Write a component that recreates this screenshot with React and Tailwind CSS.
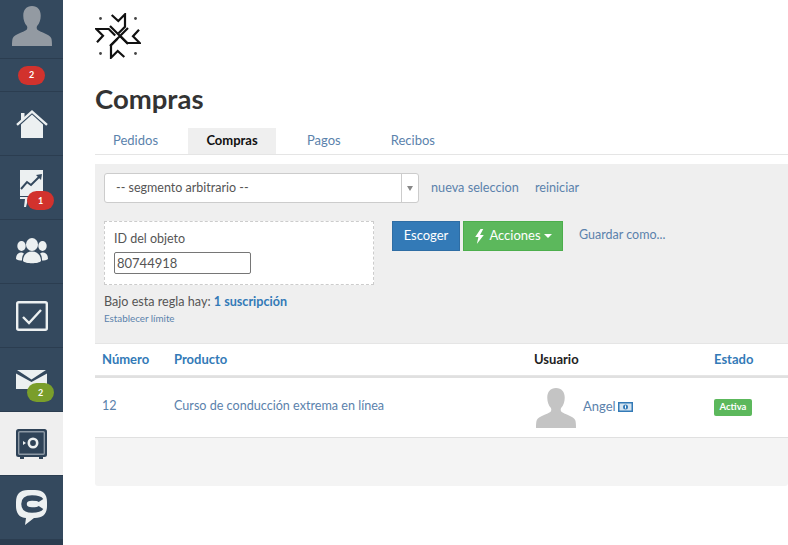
import React from "react";

function Badge({ color, children, className }) {
  return (
    <span
      className={`absolute flex h-[19px] w-[27px] items-center justify-center rounded-[10px] text-[9px] font-bold text-white ${color} ${className}`}
    >
      {children}
    </span>
  );
}

function Person({ className, fill }) {
  return (
    <svg viewBox="0 0 44 44" className={className}>
      <path
        fill={fill}
        d="M22 0c6.200 0 9.600 4.400 9.600 10.600 0 4.600-1.600 8.800-3.800 11.200-.9 1-.9 3.600.4 4.600 3.600 2.600 13 4.400 15 9.200.6 1.600.8 5 .8 8.400H0c0-3.400.2-6.800.8-8.400 2-4.800 11.400-6.600 15-9.200 1.300-1 1.300-3.600.4-4.600-2.200-2.400-3.800-6.600-3.800-11.200C12.400 4.400 15.800 0 22 0z"
      />
    </svg>
  );
}

function NavItem({ active, children }) {
  return (
    <div
      className={`relative flex h-[64px] items-center justify-center border-b border-[#2b3d50] ${
        active ? "bg-[#efefef]" : ""
      }`}
    >
      {children}
    </div>
  );
}

function Sidebar() {
  return (
    <div className="flex h-[545px] w-[63px] shrink-0 flex-col bg-[#34495e]">
      <div className="flex h-[59px] items-end justify-center border-b border-[#2b3d50] pb-[12px]">
        <Person className="h-[40px] w-[42px]" fill="#939aa2" />
      </div>
      <div className="flex h-[33px] items-center justify-center border-b border-[#2b3d50]">
        <span className="flex h-[19px] w-[27px] items-center justify-center rounded-[10px] bg-[#d2322d] text-[9px] font-bold text-white">
          2
        </span>
      </div>
      <NavItem>
        <svg viewBox="0 0 32 32" className="h-[32px] w-[32px]">
          <path fill="#ecf0f1" d="M5 16.500 16 6.500l11 10V30H5z" />
          <path fill="none" stroke="#ecf0f1" strokeWidth="2.400" d="M1 16.800 16 3.500l15 13.300" />
          <path fill="#ecf0f1" d="M5 5h3.500v5.500L5 13.500z" />
        </svg>
      </NavItem>
      <NavItem>
        <svg viewBox="0 0 24 38" className="absolute left-[20px] top-[14px] h-[38px] w-[24px]">
          <path fill="#ecf0f1" d="M0 0h23v26H0z" />
          <path fill="none" stroke="#34495e" strokeWidth="2" d="M1 19l6-7 4 3 8-8" />
          <path fill="#34495e" d="M16 5l6-1-1 6z" />
          <path fill="#ecf0f1" d="M0 27h13v2H8l-2 8H4l1-8H0z" />
        </svg>
        <Badge color="bg-[#d2322d]" className="left-[27px] top-[35px]">1</Badge>
      </NavItem>
      <NavItem>
        <svg viewBox="0 0 32 27" className="h-[27px] w-[32px]">
          <g fill="#ecf0f1">
            <ellipse cx="5.500" cy="8" rx="4.200" ry="5" />
            <ellipse cx="26.500" cy="8" rx="4.200" ry="5" />
            <path d="M0 21c0-4 2-6.500 5-6.500 1.300 0 2 .5 3 1-1.500 1.800-2 4-2 7-2.500 0-4.500-.5-6-1.500zM32 21c0-4-2-6.500-5-6.500-1.300 0-2 .5-3 1 1.500 1.800 2 4 2 7 2.500 0 4.500-.5 6-1.500z" />
            <ellipse cx="16" cy="6.500" rx="6" ry="6.500" />
            <path d="M7 23c0-5 3-9.500 9-9.500s9 4.500 9 9.500c-2 3-16 3-18 0z" />
          </g>
        </svg>
      </NavItem>
      <NavItem>
        <svg viewBox="0 0 32 30" className="h-[30px] w-[32px]">
          <rect x="1.200" y="1.200" width="29.600" height="27.600" rx="1.500" fill="none" stroke="#ecf0f1" strokeWidth="2.400" />
          <path fill="none" stroke="#ecf0f1" strokeWidth="2.400" d="M7 16l6 6L25 9" />
        </svg>
      </NavItem>
      <NavItem>
        <svg viewBox="0 0 31 19" className="absolute left-[16px] top-[22px] h-[19px] w-[31px]">
          <path fill="#ecf0f1" d="M0 3.500 15.500 12 31 3.500V19H0z" />
          <path fill="#ecf0f1" d="M1 0h29L15.500 9.500z" />
        </svg>
        <Badge color="bg-[#7a9e2b]" className="left-[27px] top-[35px]">2</Badge>
      </NavItem>
      <NavItem active>
        <svg viewBox="0 0 31 30" className="h-[30px] w-[31px]">
          <rect x="0" y="0" width="31" height="28" rx="2.500" fill="#2f4358" />
          <rect x="2.700" y="2.700" width="25.600" height="22.600" rx="1" fill="none" stroke="#8c98a4" strokeWidth="1.400" />
          <path fill="#2f4358" d="M4 28h4v2H4zM23 28h4v2h-4z" />
          <circle cx="17" cy="14" r="4.200" fill="none" stroke="#ecf0f1" strokeWidth="2.600" />
          <path fill="#ecf0f1" d="M7 12l3 2-3 2z" />
        </svg>
      </NavItem>
      <NavItem>
        <svg viewBox="0 0 31 35" className="h-[35px] w-[31px]">
          <path
            fill="#ecf0f1"
            d="M12 0h7c8 0 12 4 12 12v4c0 8-4 12-12 12h-1l-9 7 1-7C4 28 0 24 0 16v-4C0 4 4 0 12 0z"
          />
          <path fill="none" stroke="#34495e" strokeWidth="5.500" d="M25 10.500c-1-1.500-4-2.500-9-2.500-5 0-8 2-8 6s3 6 8 6c5 0 8-1 9-2.500" />
        </svg>
      </NavItem>
      <div className="flex-1 bg-[#2b3d50]" />
    </div>
  );
}

// pinwheel of four notched arms around a double-lined X
function Logo() {
  return (
    <svg viewBox="0 0 46 46" className="h-[46px] w-[46px]">
      <g fill="none" stroke="#111" strokeWidth="2.200">
        <path d="M16.700 2l6.600 6L30 1.300v12.400l-6.500 6.500" />
        <path d="M29.300 44l-6.600-6L16 44.700V32.300l6.500-6.500" />
        <path d="M2 29.300l6-6.600L1.300 16h12.400l6.500 6.500" />
        <path d="M44 16.700l-6 6.600 6.700 6.700H32.300l-6.500-6.500" />
        <path d="M15 13l18 18M33 15L15 33" />
      </g>
      <g fill="#444">
        <circle cx="5.500" cy="5.500" r="1.400" />
        <circle cx="40.500" cy="5.500" r="1.400" />
        <circle cx="5.500" cy="40.500" r="1.400" />
        <circle cx="40.500" cy="40.500" r="1.400" />
      </g>
    </svg>
  );
}

function Tabs() {
  return (
    <div className="mt-[14px] flex h-[27px] items-stretch border-b border-[#e5e5e5] text-[13px]">
      <span className="ml-[18px] flex items-center text-[#5b82ac]">Pedidos</span>
      <span className="ml-[30px] flex w-[88px] items-center justify-center bg-[#efefef] font-bold text-[#111]">
        Compras
      </span>
      <span className="ml-[31px] flex items-center text-[#5b82ac]">Pagos</span>
      <span className="ml-[50px] flex items-center text-[#5b82ac]">Recibos</span>
    </div>
  );
}

function Filters() {
  return (
    <div className="mt-[9px] h-[179px] bg-[#efefef] pl-[9px] pt-[9px]">
      <div className="flex items-center">
        <div className="flex h-[30px] w-[315px] rounded-[3px] border border-[#ccc] bg-white">
          <div className="flex-1 pl-[11px] text-[12.500px] leading-[27px] text-[#555]">
            -- segmento arbitrario --
          </div>
          <div className="flex w-[17px] items-center justify-center border-l border-[#ccc]">
            <span className="h-0 w-0 border-x-[3.500px] border-t-[5px] border-x-transparent border-t-[#888]" />
          </div>
        </div>
        <span className="ml-[12px] text-[12.700px] text-[#5b82ac]">nueva seleccion</span>
        <span className="ml-[16px] text-[12.700px] text-[#5b82ac]">reiniciar</span>
      </div>
      <div className="mt-[18px] flex items-start">
        <div className="h-[64px] w-[270px] border border-dashed border-[#ccc] bg-white pl-[9px] pt-[9px]">
          <div className="text-[12.500px] leading-[16px] text-[#555]">ID del objeto</div>
          <input
            readOnly
            value="80744918"
            className="mt-[5px] block h-[22px] w-[137px] rounded-[2px] border border-[#767676] bg-white px-[2px] text-[13px] text-[#555]"
          />
        </div>
        <button className="ml-[18px] h-[30px] w-[68px] border border-[#2e6da4] bg-[#337ab7] text-[13px] text-white">
          Escoger
        </button>
        <button className="ml-[3px] flex h-[30px] w-[100px] items-center justify-center gap-[3px] border border-[#4cae4c] bg-[#5cb85c] text-[13px] text-white">
          <svg viewBox="0 0 10 14" className="mr-[1px] h-[15px] w-[11px]">
            <path fill="#fff" d="M6 0 1 7.500h3L2.500 14 9 5.500H5.500L8.500 0z" />
          </svg>
          Acciones
          <span className="h-0 w-0 border-x-[4px] border-t-[4px] border-x-transparent border-t-white" />
        </button>
        <span className="ml-[16px] mt-[5px] text-[12.500px] text-[#5b82ac]">Guardar como...</span>
      </div>
      <div className="mt-[8px] text-[12.600px] leading-[18px] text-[#555]">
        Bajo esta regla hay: <span className="font-bold text-[#337ab7]">1 suscripción</span>
      </div>
      <div className="text-[9.800px] leading-[14px] text-[#5b82ac]">Establecer límite</div>
    </div>
  );
}

function OrdersTable() {
  return (
    <>
      <div className="flex h-[33px] items-center border-y border-[#e5e5e5] text-[13px] font-bold">
        <span className="ml-[7px] w-[72px] text-[#337ab7]">Número</span>
        <span className="w-[360px] text-[#337ab7]">Producto</span>
        <span className="w-[180px] text-[#222]">Usuario</span>
        <span className="text-[#337ab7]">Estado</span>
      </div>
      <div className="flex h-[62px] items-center border-y-2 border-b border-y-[#e0e0e0] text-[12.600px] text-[#5b82ac]">
        <span className="mb-[2px] ml-[7px] w-[72px]">12</span>
        <span className="mb-[2px] w-[360px]">Curso de conducción extrema en línea</span>
        <span className="flex w-[180px] items-center">
          <Person className="h-[40px] w-[44px]" fill="#c4c4c4" />
          <span className="mb-[2px] ml-[5px] flex items-center gap-[2px] text-[13px]">
            Angel
            <svg viewBox="0 0 15 10" className="h-[10px] w-[15px]">
              <rect width="15" height="10" fill="#337ab7" />
              <rect x="1.500" y="1.500" width="12" height="7" fill="#d6e4f0" />
              <circle cx="7.500" cy="5" r="2.500" fill="#337ab7" />
              <rect x="7" y="3.500" width="1" height="3" fill="#fff" />
            </svg>
          </span>
        </span>
        <span className="flex h-[17px] w-[38px] items-center justify-center rounded-[2px] bg-[#5cb85c] text-[9.500px] font-bold text-white">
          Activa
        </span>
      </div>
      <div className="h-[48px] rounded-b-[3px] bg-[#f4f4f4]" />
    </>
  );
}

export default function App() {
  return (
    <div
      className="flex h-[545px] w-[788px] overflow-hidden bg-white"
      style={{ fontFamily: "Lato, 'Liberation Sans', sans-serif" }}
    >
      <Sidebar />
      <div className="ml-[32px] flex-1">
        <div className="mt-[13px]">
          <Logo />
        </div>
        <h1 className="mt-[25px] text-[27.500px] font-bold leading-[30px] text-[#333]">Compras</h1>
        <Tabs />
        <Filters />
        <OrdersTable />
      </div>
    </div>
  );
}
